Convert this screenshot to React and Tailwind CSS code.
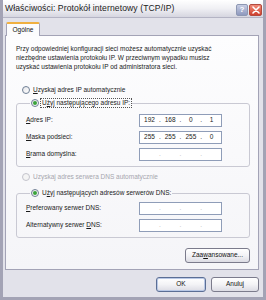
import React from "react";

const F = { fontFamily: '"Liberation Sans", Arial, sans-serif' };

function Radio({ checked, disabled }) {
  return (
    <span
      className={`inline-flex items-center justify-center w-[8px] h-[8px] rounded-full border shrink-0 ${
        disabled ? "border-[#c4c4cc] bg-[#f4f4f4]" : "border-[#6f7f94] bg-gradient-to-br from-[#e6e6ea] to-white"
      }`}
    >
      {checked && <span className="w-[4px] h-[4px] rounded-full bg-[#3aa33a]" />}
    </span>
  );
}

function IpField({ values }) {
  const v = values || ["", "", "", ""];
  return (
    <div className="w-[83px] h-[13px] border border-[#8f9db8] bg-white flex items-center text-[6.5px] leading-none">
      {v.map((x, i) => (
        <React.Fragment key={i}>
          <span className="flex-1 text-center text-[#222]">{x}</span>
          {i < 3 && <span className={values ? "text-[#333]" : "text-[#b8b8b8]"}>.</span>}
        </React.Fragment>
      ))}
    </div>
  );
}

function Row({ label, values }) {
  return (
    <div className="flex items-center h-[13px]">
      <span className="w-[113px] text-[6.5px] leading-none text-[#1a1a1a]">{label}</span>
      <IpField values={values} />
    </div>
  );
}

function XpButton({ children, def, className = "" }) {
  return (
    <div
      className={`flex items-center justify-center rounded-[3px] border text-[6.5px] leading-none text-[#111] bg-gradient-to-b from-white via-[#f3f3f6] to-[#dcdce4] ${
        def ? "border-[#5b6e95] shadow-[inset_0_0_0_1px_#b9c8e6]" : "border-[#7b7b8c]"
      } ${className}`}
    >
      {children}
    </div>
  );
}

export default function App() {
  return (
    <div
      style={F}
      className="w-[266px] h-[300px] flex flex-col bg-[#e2e2ea] border-x-[3px] border-b-[3px] border-[#a3a3b5] overflow-hidden"
    >
      {/* title bar */}
      <div className="h-[18px] -mx-[3px] flex items-center pl-[5px] pr-[4px] bg-gradient-to-b from-white via-[#f0f0f4] to-[#d6d6e0] border-b border-[#b4b4c4]">
        <span className="flex-1 text-[8.6px] leading-none text-[#222] tracking-[0.1px]">
          Właściwości: Protokół internetowy (TCP/IP)
        </span>
        <div className="flex gap-[1px] mt-[2px]">
          <div className="w-[12px] h-[12px] rounded-[2px] border border-[#8d97b3] bg-gradient-to-b from-[#c7cde3] to-[#8f99be] flex items-center justify-center text-white text-[8px] font-bold leading-none">
            ?
          </div>
          <div className="w-[13px] h-[12px] rounded-[2px] border border-[#b24a3e] bg-gradient-to-b from-[#f08a78] to-[#cf3e2c] flex items-center justify-center">
            <svg width="8" height="8" viewBox="0 0 8 8">
              <path d="M1 1L7 7M7 1L1 7" stroke="white" strokeWidth="1.6" strokeLinecap="round" />
            </svg>
          </div>
        </div>
      </div>

      {/* body */}
      <div className="flex flex-col pl-[2px] pr-[4px] pt-[4px]">
        {/* tab */}
        <div className="relative z-10 ml-[1px] -mb-[1px] w-[34px] h-[14px] bg-[#fcfcfd] border-x border-[#a3a3b6] border-t-2 border-t-[#f0b040] rounded-t-[2px] flex items-center justify-center text-[6.5px] leading-none text-[#111]">
          Ogólne
        </div>
        {/* panel */}
        <div className="h-[235px] border border-[#a3a3b6] bg-gradient-to-b from-[#fdfdfe] to-[#f5f5f8] pl-[10px] pr-[8px] pt-[8px] flex flex-col">
          <p className="text-[6.5px] leading-[9px] text-[#1a1a1a] pr-[20px]">
            Przy odpowiedniej konfiguracji sieci możesz automatycznie uzyskać niezbędne ustawienia protokołu IP. W
            przeciwnym wypadku musisz uzyskać ustawienia protokołu IP od administratora sieci.
          </p>

          <div className="mt-[14px] h-[10px] flex items-center pl-[6px] gap-[3px] text-[6.5px] leading-none text-[#1a1a1a]">
            <Radio />
            <span>
              <u>U</u>zyskaj adres IP automatycznie
            </span>
          </div>

          <fieldset className="mt-[3px] border border-[#c9c9d3] rounded-[3px] pl-[9px] pb-[5px] pt-[6px]">
            <legend className="ml-[4px] px-[1px] h-[10px] flex items-center gap-[2px] text-[6.5px] leading-none text-[#1a1a1a]">
              <Radio checked />
              <span className="outline outline-1 outline-dotted outline-[#555] px-[1px] py-[1px]">
                U<u>ż</u>yj następującego adresu IP:
              </span>
            </legend>
            <div className="flex flex-col gap-[4px]">
              <Row label={<><u>A</u>dres IP:</>} values={["192", "168", "0", "1"]} />
              <Row label={<><u>M</u>aska podsieci:</>} values={["255", "255", "255", "0"]} />
              <Row label={<><u>B</u>rama domyślna:</>} />
            </div>
          </fieldset>

          <div className="mt-[5px] h-[10px] flex items-center pl-[6px] gap-[3px] text-[6.5px] leading-none text-[#a6a6ae]">
            <Radio disabled />
            <span>Uzyskaj adres serwera DNS automatycznie</span>
          </div>

          <fieldset className="mt-[6px] border border-[#c9c9d3] rounded-[3px] pl-[9px] pb-[5px] pt-[4px]">
            <legend className="ml-[4px] px-[1px] h-[10px] flex items-center gap-[3px] text-[6.5px] leading-none text-[#1a1a1a]">
              <Radio checked />
              <span>
                U<u>ż</u>yj następujących adresów serwerów DNS:
              </span>
            </legend>
            <div className="flex flex-col gap-[4px]">
              <Row label={<><u>P</u>referowany serwer DNS:</>} />
              <Row label={<>Alternatywny serwer <u>D</u>NS:</>} />
            </div>
          </fieldset>

          <div className="mt-[10px] flex justify-end">
            <XpButton className="w-[65px] h-[15px]">
              Zaa<u>w</u>ansowane...
            </XpButton>
          </div>
        </div>

        {/* bottom buttons */}
        <div className="mt-[7px] flex justify-end gap-[5px] pr-[-1px]">
          <XpButton def className="w-[50px] h-[15px]">OK</XpButton>
          <XpButton className="w-[48px] h-[15px]">Anuluj</XpButton>
        </div>
      </div>
    </div>
  );
}
